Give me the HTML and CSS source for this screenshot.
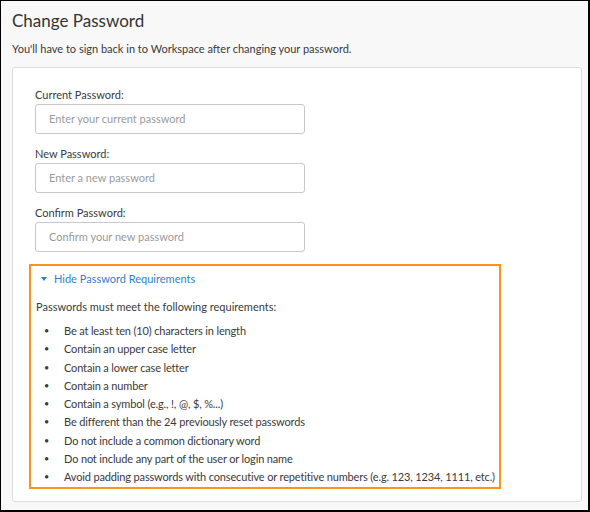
FILE: index.html
```html
<!DOCTYPE html>
<html>
<head>
<meta charset="utf-8">
<link rel="stylesheet" href="styles.css">
</head>
<body>
<div class="frame">
  <h1 class="title">Change Password</h1>
  <p class="subtitle">You'll have to sign back in to Workspace after changing your password.</p>
  <div class="card">
    <div class="field">
      <label class="label">Current Password:</label>
      <div class="input">Enter your current password</div>
    </div>
    <div class="field">
      <label class="label">New Password:</label>
      <div class="input">Enter a new password</div>
    </div>
    <div class="field">
      <label class="label">Confirm Password:</label>
      <div class="input">Confirm your new password</div>
    </div>
    <div class="reqs">
      <div class="toggle"><span class="caret"></span>Hide Password Requirements</div>
      <p class="intro">Passwords must meet the following requirements:</p>
      <ul class="list">
        <li>Be at least ten (10) characters in length</li>
        <li>Contain an upper case letter</li>
        <li>Contain a lower case letter</li>
        <li>Contain a number</li>
        <li>Contain a symbol (e.g., !, @, $, %...)</li>
        <li>Be different than the 24 previously reset passwords</li>
        <li>Do not include a common dictionary word</li>
        <li>Do not include any part of the user or login name</li>
        <li>Avoid padding passwords with consecutive or repetitive numbers (e.g. 123, 1234, 1111, etc.)</li>
      </ul>
    </div>
  </div>
</div>
</body>
</html>
```

FILE: styles.css
```css
* { box-sizing: border-box; }
html, body { margin: 0; padding: 0; }
body {
  font-family: Lato, "Open Sans", sans-serif;
  color: #3a3a3a;
}
.frame {
  width: 590px;
  height: 512px;
  background: #f8f8f8;
  border-left: 1px solid #000;
  border-top: 1px solid #000;
  border-right: 2px solid #000;
  border-bottom: 2px solid #000;
  padding: 0 6px 0 11px;
  overflow: hidden;
}
.title {
  margin: 9px 0 0;
  font-size: 17px;
  font-weight: 400;
  line-height: 22px;
  color: #333;
}
.subtitle {
  margin: 9px 0 0;
  font-size: 11px;
  line-height: 16px;
}
.card {
  margin-top: 10px;
  background: #fff;
  border: 1px solid #dcdcdc;
  border-radius: 3px;
  padding: 19px 0 11px 22px;
  height: 435px;
}
.field { margin-bottom: 12px; width: 270px; }
.label {
  display: block;
  font-size: 11px;
  line-height: 16px;
  margin-bottom: 1px;
}
.input {
  height: 30px;
  border: 1px solid #c8c8c8;
  border-radius: 3px;
  padding: 0 0 0 13px;
  font-size: 11px;
  line-height: 28px;
  color: #9a9a9a;
}
.reqs {
  margin: 2px 0 0 -6px;
  width: 472px;
  height: 225px;
  border: 2px solid #f7941d;
  padding: 5px 0 2px 5px;
}
.toggle {
  font-size: 11px;
  line-height: 16px;
  color: #2f7fce;
  display: flex;
  align-items: center;
  padding-left: 5px;
}
.caret {
  width: 0; height: 0;
  border-left: 3.5px solid transparent;
  border-right: 3.5px solid transparent;
  border-top: 4px solid #2f7fce;
  margin-right: 7px;
}
.intro {
  margin: 12px 0 0;
  font-size: 11px;
  line-height: 16px;
}
.list {
  margin: 7px 0 0;
  padding-left: 8px;
  list-style: none;
  font-size: 11px;
  line-height: 18.25px;
  letter-spacing: -0.15px;
}
.list li {
  display: flex;
  white-space: nowrap;
}
.list li::before {
  content: "•";
  flex: 0 0 20px;
  font-size: 9px;
}
```
